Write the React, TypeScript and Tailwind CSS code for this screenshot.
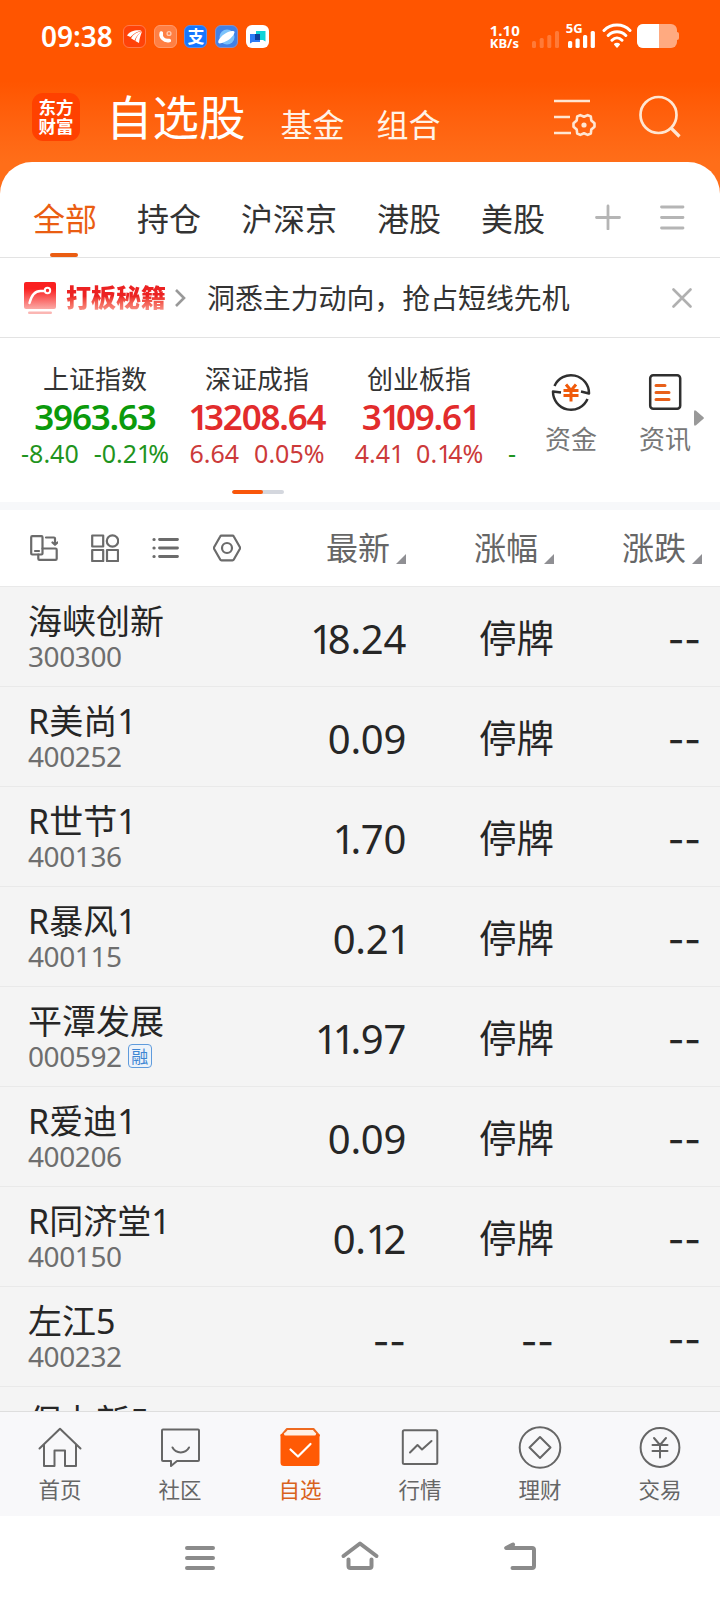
import type { ReactNode, SVGProps } from "react";

type Quote = { name: string; code: string; price: string; pct: string; change: string; margin?: boolean };

const quotes: Quote[] = [
  { name: "海峡创新", code: "300300", price: "18.24", pct: "停牌", change: "--" },
  { name: "R美尚1", code: "400252", price: "0.09", pct: "停牌", change: "--" },
  { name: "R世节1", code: "400136", price: "1.70", pct: "停牌", change: "--" },
  { name: "R暴风1", code: "400115", price: "0.21", pct: "停牌", change: "--" },
  { name: "平潭发展", code: "000592", price: "11.97", pct: "停牌", change: "--", margin: true },
  { name: "R爱迪1", code: "400206", price: "0.09", pct: "停牌", change: "--" },
  { name: "R同济堂1", code: "400150", price: "0.12", pct: "停牌", change: "--" },
  { name: "左江5", code: "400232", price: "--", pct: "--", change: "--" },
];

const indices = [
  { name: "上证指数", value: "3963.63", diff: "-8.40", pct: "-0.21%", up: false },
  { name: "深证成指", value: "13208.64", diff: "6.64", pct: "0.05%", up: true },
  { name: "创业板指", value: "3109.61", diff: "4.41", pct: "0.14%", up: true },
];

const groups = ["全部", "持仓", "沪深京", "港股", "美股"];

export default function App() {
  return (
    <div className="flex h-[1600px] w-[720px] flex-col overflow-hidden bg-white font-['Noto_Sans','Noto_Sans_CJK_SC',sans-serif] whitespace-nowrap text-[#333]">
      <div className="h-[194px] shrink-0 bg-linear-to-b from-[#ff5500] from-[42%] to-[#ff6e19] to-[84%] text-white">
        <StatusBar />
        <Header />
      </div>
      <main className="relative -mt-8 flex min-h-0 flex-1 flex-col overflow-hidden rounded-t-[32px] bg-white">
        <GroupTabs />
        <Banner />
        <IndexStrip />
        <div className="h-2 shrink-0 bg-[#f7f8fa]" />
        <ListHeader />
        <div className="min-h-0 flex-1 overflow-hidden bg-[#f4f4f4]">
          {quotes.map((q) => (
            <QuoteRow key={q.code} quote={q} />
          ))}
          <div className="pt-[15px] pl-7 text-[34px] leading-[38px] text-[#262626]">保力新5</div>
        </div>
      </main>
      <TabBar />
      <SystemNav />
    </div>
  );
}

// The figure 1 is set tighter than the other digits
function Num({ children }: { children: string }) {
  return (
    <>
      {children.split(/(1)/).map((part, i) =>
        part === "1" ? (
          <span key={i} className="tracking-[-0.13em]">
            1
          </span>
        ) : (
          part
        ),
      )}
    </>
  );
}

function StatusBar() {
  return (
    <div className="flex h-[72px] items-center pl-[41px]">
      <span className="w-[82px] text-[28px] leading-[28px] font-semibold">09:38</span>
      <div className="flex gap-[7.7px]">
        <svg className="size-[23px]" viewBox="0 0 23 23">
          <rect x=".5" y=".5" width="22" height="22" rx="5.5" fill="#ff4208" stroke="#ff7a4c" />
          <path d="M4 10.500C7 6 12 4.800 18.500 5.500c-4 1-8 3-11 6.500zM8 13.200c2-4 6-6.200 11-7.200-3.500 2.500-6 5.500-7.500 9.500zM12.300 16c1-4 3.200-7.500 6.700-9.500-1.500 3.500-2.500 7-3 11.500z" fill="#fff" />
        </svg>
        <svg className="size-[23px]" viewBox="0 0 23 23">
          <rect x=".5" y=".5" width="22" height="22" rx="5.500" fill="#ff7f43" stroke="#ff9a6b" />
          <path d="M7.300 8c-1 4 2.500 8.500 8 7.500" fill="none" stroke="#fff" strokeWidth="3.600" strokeLinecap="round" />
          <circle cx="15" cy="8.500" r="1.900" fill="none" stroke="#ffc9ad" strokeWidth="1.400" />
        </svg>
        <span className="flex size-[23px] items-center justify-center rounded-[6px] border border-[#5a8eea] bg-[#1677ff] text-[17px] leading-none font-bold">
          支
        </span>
        <svg className="size-[23px]" viewBox="0 0 23 23">
          <rect x=".5" y=".5" width="22" height="22" rx="5.500" fill="#4181e6" stroke="#8a8fc4" />
          <circle cx="12" cy="12" r="7.500" fill="#7cc3fb" />
          <path d="M3.500 18C2 15 8 9 13 7c4-1.500 7-1 6.500.5-1 4-6 8-10 9.500-3 1.200-5 2-6 1z" fill="#fff" />
        </svg>
        <svg className="size-[23px]" viewBox="0 0 23 23">
          <rect width="23" height="23" rx="6" fill="#fff" />
          <path d="M10 6h9.500v10.500L17 15h-7z" fill="#0fd3d8" />
          <path d="M4 9h10v8H6.500L4 18.500z" fill="#2b7cf6" />
          <path d="M9 9h5v6H9z" fill="#0b3f9c" />
        </svg>
      </div>
      <div className="ml-[221px] w-[42px] font-bold">
        <div className="text-[15px] leading-[14px]">1.10</div>
        <div className="text-[13px] leading-[13px]">KB/s</div>
      </div>
      <svg className="h-[26px] w-7" viewBox="0 0 28 26" fill="#fff" opacity=".22">
        <rect x="0" y="18" width="4" height="7" rx="1.500" />
        <rect x="7.700" y="15" width="4" height="10" rx="1.500" />
        <rect x="15.300" y="12" width="4" height="13" rx="1.500" />
        <rect x="23" y="8" width="4" height="17" rx="1.500" />
      </svg>
      <div className="relative ml-2">
        <svg className="h-[26px] w-7" viewBox="0 0 28 26" fill="#fff">
          <rect x="0" y="18" width="4.200" height="7" rx="1.500" />
          <rect x="7.500" y="15.500" width="4.200" height="9.500" rx="1.500" />
          <rect x="15" y="12" width="4.200" height="13" rx="1.500" />
          <rect x="22.700" y="8" width="4.200" height="17" rx="1.500" />
        </svg>
        <span className="absolute -top-px -left-0.5 text-[13px] leading-[13px] font-bold">5G</span>
      </div>
      <svg className="ml-[6px] h-[26px] w-[30px]" viewBox="0 0 30 26" fill="none" stroke="#fff" strokeWidth="3" strokeLinecap="round">
        <path d="M2 7.500c7-7.300 19-7.300 26 0M6.200 12.500c5-5 12.600-5 17.600 0M10 17.200c3-3 7-3 10 0" />
        <path d="M15 24l-2.300-2.700c1.200-1.200 3.400-1.200 4.600 0z" fill="#fff" strokeWidth="1.500" strokeLinejoin="round" />
      </svg>
      <div className="ml-[5px] flex items-center">
        <div className="h-6 w-10 overflow-hidden rounded-[6px] bg-[#ffaa80]">
          <div className="h-full w-[22px] bg-white" />
        </div>
        <div className="h-2 w-0.5 rounded-r-[2px] bg-[#ffaa80]" />
      </div>
    </div>
  );
}

function Header() {
  return (
    <div className="flex h-[90px] items-center pl-8">
      <div className="flex size-12 flex-col items-center justify-center rounded-[11px] bg-[#ff4100] pb-0.5 font-['Noto_Sans_CJK_SC',sans-serif] text-[17.500px] leading-[19.500px] font-bold">
        <span>东方</span>
        <span>财富</span>
      </div>
      <h1 className="ml-[26px] text-[46.500px] leading-[47px]">自选股</h1>
      <span className="mt-4 ml-[35px] text-[32px] leading-8 text-[#fff3e8]">基金</span>
      <span className="mt-4 ml-8 text-[32px] leading-8 text-[#fff3e8]">组合</span>
      <svg className="ml-[112px] h-[42px] w-[44px]" viewBox="0 0 44 42" fill="none" stroke="#ffe6d2" strokeWidth="2.600">
        <path d="M1 5h36M1 21h16M1 37h17" />
        <path
          d="M0-8.200L3.700-9.900 6.800-8.500 7.300-4.600 10.500-1.800V1.800L7.300 4.600 6.800 8.500 3.700 9.900 0 8.200-3.700 9.900-6.800 8.500-7.300 4.600-10.500 1.800V-1.800L-7.300-4.600-6.800-8.500-3.700-9.900z"
          transform="translate(31 29)"
          strokeLinejoin="round"
        />
        <circle cx="31" cy="29" r="2.600" fill="#ffe6d2" stroke="none" />
      </svg>
      <svg className="ml-[41px] size-[44px]" viewBox="0 0 44 44" fill="none" stroke="#ffe6d2" strokeWidth="2.700">
        <circle cx="20.500" cy="20" r="18" />
        <path d="M33 33l8.500 8.500" strokeWidth="3.200" />
      </svg>
    </div>
  );
}

function GroupTabs() {
  return (
    <div className="flex h-24 shrink-0 items-stretch border-b border-[#e3e3e3] pl-[33px]">
      <nav className="flex gap-10">
        {groups.map((g, i) => (
          <div key={g} className={i === 0 ? "flex flex-col items-center text-[#ea5d12]" : "flex flex-col items-center"}>
            <span className="mt-[41px] text-[32px] leading-8">{g}</span>
            {i === 0 && <i className="mt-[18px] -ml-0.5 h-1 w-7 rounded-full bg-[#ea5d12]" />}
          </div>
        ))}
      </nav>
      <svg className="mt-[42px] ml-[50px] size-[26px]" viewBox="0 0 26 26" stroke="#b5b5b5" strokeWidth="2.800" strokeLinecap="round">
        <path d="M1.500 13.500h23M13 2v23" />
      </svg>
      <svg className="mt-[42px] ml-[38px] size-[26px]" viewBox="0 0 26 26" stroke="#b5b5b5" strokeWidth="2.800" strokeLinecap="round">
        <path d="M2.500 3h21.500M2.500 13.500h21.500M2.500 24h21.500" />
      </svg>
    </div>
  );
}

function Banner() {
  return (
    <div className="flex h-20 shrink-0 items-center border-b border-[#e3e3e3] pl-6">
      <svg className="h-8 w-8" viewBox="0 0 32 32" fill="none">
        <defs>
          <linearGradient id="banner" x1="0" y1="0" x2="0" y2="1">
            <stop offset=".25" stopColor="#fa2020" />
            <stop offset="1" stopColor="#fbaaa6" />
          </linearGradient>
        </defs>
        <rect width="32" height="27" rx="2" fill="url(#banner)" />
        <path d="M5.500 21c2-8 5-12 11-12h4" stroke="#fff" strokeWidth="2.400" strokeLinecap="round" />
        <circle cx="23.500" cy="8.500" r="2.700" stroke="#fff" strokeWidth="2" />
        <rect x="4" y="29.500" width="24" height="2.500" rx="1.200" fill="#fbb6b3" />
      </svg>
      <span className="ml-2.5 bg-linear-to-b from-[#ec2222] from-45% to-[#f9a8a0] bg-clip-text pb-0.5 text-[25px] leading-8 font-black text-transparent">
        打板秘籍
      </span>
      <svg className="ml-2 h-5 w-3" viewBox="0 0 12 20" fill="none" stroke="#999" strokeWidth="2.600">
        <path d="M2 2l8 8-8 8" />
      </svg>
      <span className="ml-[21px] text-[27.900px] leading-8">洞悉主力动向，抢占短线先机</span>
      <svg className="ml-[102px] size-5" viewBox="0 0 20 20" stroke="#b0b0b0" strokeWidth="2.600" strokeLinecap="round">
        <path d="M1.500 1.500l17 17M18.500 1.500l-17 17" />
      </svg>
    </div>
  );
}

function IndexStrip() {
  return (
    <div className="flex h-[164px] shrink-0 flex-col">
      <div className="flex h-[152px] pl-[14px]">
        {indices.map((item) => (
          <div key={item.name} className="flex w-[162px] shrink-0 flex-col items-center pt-[26px]">
            <span className="text-[26px] leading-[30px]">{item.name}</span>
            <span
              className={
                item.up
                  ? "mt-[3px] text-[35px] leading-10 font-semibold tracking-[-1.200px] text-[#e22c2c]"
                  : "mt-[3px] text-[35px] leading-10 font-semibold tracking-[-1.200px] text-[#0b9a0b]"
              }
            >
              <Num>{item.value}</Num>
            </span>
            <span
              className={
                item.up
                  ? "mt-px flex gap-[15px] text-[25px] leading-[30px] text-[#cc3a3a]"
                  : "mt-px flex gap-[15px] text-[25px] leading-[30px] text-[#1f9420]"
              }
            >
              <span>
                <Num>{item.diff}</Num>
              </span>
              <span>
                <Num>{item.pct}</Num>
              </span>
            </span>
          </div>
        ))}
        <span className="mt-[100px] ml-2 w-4 text-[25px] leading-[30px] text-[#1f9420]">-</span>
        <div className="ml-[21px] flex flex-col items-center pt-[34px]">
          <svg className="size-10" viewBox="0 0 40 40" fill="none" stroke="#2f2f2f" strokeWidth="2.500">
            <path d="M3.500 14A18 18 0 0 1 38 21.500l-8-2M36.500 27A18 18 0 0 1 2 19.500l8 1" strokeLinejoin="round" />
            <path d="M15 12.500l5 6 5-6M12.500 18.500h15M12.500 23.500h15M20 18.500v11" stroke="#f05a0a" strokeWidth="3" />
          </svg>
          <span className="mt-3 text-[26px] leading-[30px] text-[#777]">资金</span>
        </div>
        <div className="ml-[42px] flex flex-col items-center pt-[34px]">
          <svg className="size-10" viewBox="0 0 40 40" fill="none" stroke="#2f2f2f" strokeWidth="2.500">
            <rect x="5.200" y="3.200" width="30" height="33.500" rx="3" />
            <path d="M11 13.500h9M11 20.500h13M11 27.500h13" stroke="#e8601a" strokeWidth="3" strokeLinecap="round" />
          </svg>
          <span className="mt-3 text-[26px] leading-[30px] text-[#777]">资讯</span>
        </div>
        <svg className="mt-[72px] ml-[3px] h-4 w-2.5" viewBox="0 0 10 16" fill="#999">
          <path d="M0 2Q0-.5 2 .8L9.500 7.200q.8.8 0 1.600L2 15.200Q0 16.500 0 14z" />
        </svg>
      </div>
      <div className="ml-[232px] flex h-1 w-[52px] overflow-hidden rounded-full bg-[#d4d7de]">
        <div className="w-[31px] rounded-full bg-[#f9560a]" />
      </div>
    </div>
  );
}

function SortHead({ children }: { children: ReactNode }) {
  return (
    <div className="flex items-end justify-end">
      <span className="text-[32px] leading-8 text-[#666]">{children}</span>
      <svg className="ml-1.5 size-2.5" viewBox="0 0 10 10" fill="#8f8f93">
        <path d="M10 0v10H0z" />
      </svg>
    </div>
  );
}

function ListHeader() {
  return (
    <div className="grid h-[77px] shrink-0 grid-cols-[258px_148px_148px_148px] items-center border-b border-[#e9e9e9]">
      <div className="flex items-center gap-[33px] pl-[30px] text-[#6b6b6b]">
        <ToolIcon>
          <rect x="1.200" y="2.200" width="11.300" height="18.300" rx="1" />
          <path d="M5 17h4M16 3.500h8q1 0 1 1V10M22.500 8.500l2.500 2.300 2.500-2.300M12.500 14.500h13q1.200 0 1.200 1.200v9q0 1.200-1.200 1.200H9.500q-1.200 0-1.200-1.200V20.500" />
        </ToolIcon>
        <ToolIcon>
          <path d="M1.200 1.500h11v11h-11zM1.200 16h11v11h-11zM16 16h11v11H16z" />
          <circle cx="21.500" cy="7" r="5.700" />
        </ToolIcon>
        <ToolIcon>
          <path d="M7.500 5.500h18M7.500 14h18M7.500 22.500h18" strokeWidth="2.800" />
          <path d="M2 5.500h.1M2 14h.1M2 22.500h.1" strokeWidth="3.200" />
        </ToolIcon>
        <ToolIcon>
          <path d="M7.200 2.500q.4-.8 1.300-.8h11q.9 0 1.300.8L26.800 13q.5 1 0 2l-6 10.500q-.4.800-1.300.8h-11q-.9 0-1.300-.8L1.200 15q-.5-1 0-2z" />
          <circle cx="14" cy="14" r="5" />
        </ToolIcon>
      </div>
      <SortHead>最新</SortHead>
      <SortHead>涨幅</SortHead>
      <SortHead>涨跌</SortHead>
    </div>
  );
}

function ToolIcon({ children }: { children: ReactNode }) {
  return (
    <svg className="size-7 shrink-0" viewBox="0 0 28 28" fill="none" stroke="currentColor" strokeWidth="2.200" strokeLinecap="round" strokeLinejoin="round">
      {children}
    </svg>
  );
}

function Cell({ value }: { value: string }) {
  if (value === "--") {
    return <div className="pt-[3px] font-['Inter'] text-[36px] leading-10 font-medium">--</div>;
  }
  if (value === "停牌") {
    return <div className="-mt-px text-[37.500px] leading-10">{value}</div>;
  }
  return (
    <div className="text-[40px] leading-10 tracking-[-0.3px]">
      <Num>{value}</Num>
    </div>
  );
}

function QuoteRow({ quote }: { quote: Quote }) {
  return (
    <div className="grid h-[100px] grid-cols-[258px_148px_148px_147px] border-b border-[#e9e9e9] text-[#262626]">
      <div className="pt-[15px] pl-7">
        <div className="text-[34px] leading-[38px]">{quote.name}</div>
        <div className="mt-px flex items-center text-[28px] leading-[30px] tracking-[-0.4px] text-[#6e6e6e]">
          <span>{quote.code}</span>
          {quote.margin && (
            <span className="ml-1.5 flex size-6 items-center justify-center rounded-[4px] border-[1.500px] border-[#5f9bdc] bg-[#edf3fa] text-[17px] leading-none tracking-normal text-[#3f86d3]">
              融
            </span>
          )}
        </div>
      </div>
      <div className="pt-8 text-right">
        <Cell value={quote.price} />
      </div>
      <div className="pt-8 text-right">
        <Cell value={quote.pct} />
      </div>
      <div className="pt-[30px] text-right">
        <Cell value={quote.change} />
      </div>
    </div>
  );
}

function TabItem({ label, active, children }: { label: string; active?: boolean; children: ReactNode }) {
  return (
    <div className={active ? "flex flex-1 flex-col items-center text-[#d9621c]" : "flex flex-1 flex-col items-center text-[#666]"}>
      <TabIcon>{children}</TabIcon>
      <span className="mt-2 text-[21.500px] leading-6">{label}</span>
    </div>
  );
}

function TabIcon(props: SVGProps<SVGSVGElement>) {
  return (
    <svg {...props} className="size-11" viewBox="0 0 44 44" fill="none" stroke="currentColor" strokeWidth="2" strokeLinecap="round" strokeLinejoin="round" />
  );
}

function TabBar() {
  return (
    <nav className="flex h-[105px] shrink-0 border-t border-[#dedede] bg-[#f8f8fa] pt-[14px]">
      <TabItem label="首页">
        <path d="M1.500 22.500L22 2.800l20.500 19.700M6 19v21h10.500V24.500h10.500V40H38V19" />
      </TabItem>
      <TabItem label="社区">
        <path d="M5 3.500h35q1 0 1 1V34q0 1-1 1H19l-6 5v-5H5q-1 0-1-1V4.500q0-1 1-1z" />
        <path d="M14.500 21.500c3.500 6.500 13 6.500 16.500 0" />
      </TabItem>
      <TabItem label="自选" active>
        <path d="M3.500 9.500L9 3h26.500L41 9.500z" fill="#fff0e4" stroke="#ee6a20" />
        <path d="M3.500 9h37v27.500q0 2.500-2.500 2.500H6q-2.500 0-2.500-2.500z" fill="#ff5a05" stroke="#ff5a05" />
        <path d="M7.500 8h29" stroke="#fff0e4" strokeWidth="3" />
        <path d="M12.500 23.500l7.500 7L32.500 18" stroke="#fff" strokeWidth="2.200" />
      </TabItem>
      <TabItem label="行情">
        <rect x="4.800" y="4.300" width="34.500" height="33.700" rx="1.500" />
        <path d="M12 26.500l7.500-7.500 4.500 4.500 9.500-8.500" />
      </TabItem>
      <TabItem label="理财">
        <circle cx="22" cy="21.500" r="20.300" />
        <path d="M22 11L32.500 21.500 22 32 11.500 21.500z" />
      </TabItem>
      <TabItem label="交易">
        <circle cx="22" cy="21.500" r="19.400" />
        <path d="M16 12l6 7 6-7M14.500 19h15M14.500 25h15M22 19v12.500" />
      </TabItem>
    </nav>
  );
}

function SystemNav() {
  return (
    <div className="flex h-[84px] shrink-0 items-center justify-center gap-[120px] bg-white text-[#8b8b8b]">
      <NavIcon>
        <path d="M7 10h26M7 20h26M7 30h26" />
      </NavIcon>
      <NavIcon>
        <path d="M3.500 18L20 5.500 36.500 18M8.500 21.500V28q0 2 2 2h19q2 0 2-2v-6.500" />
      </NavIcon>
      <NavIcon>
        <path d="M13 6.500L6.200 10H32q2 0 2 2v16q0 2-2 2H12.500" />
      </NavIcon>
    </div>
  );
}

function NavIcon({ children }: { children: ReactNode }) {
  return (
    <svg className="size-10" viewBox="0 0 40 40" fill="none" stroke="currentColor" strokeWidth="4" strokeLinecap="round" strokeLinejoin="round">
      {children}
    </svg>
  );
}
